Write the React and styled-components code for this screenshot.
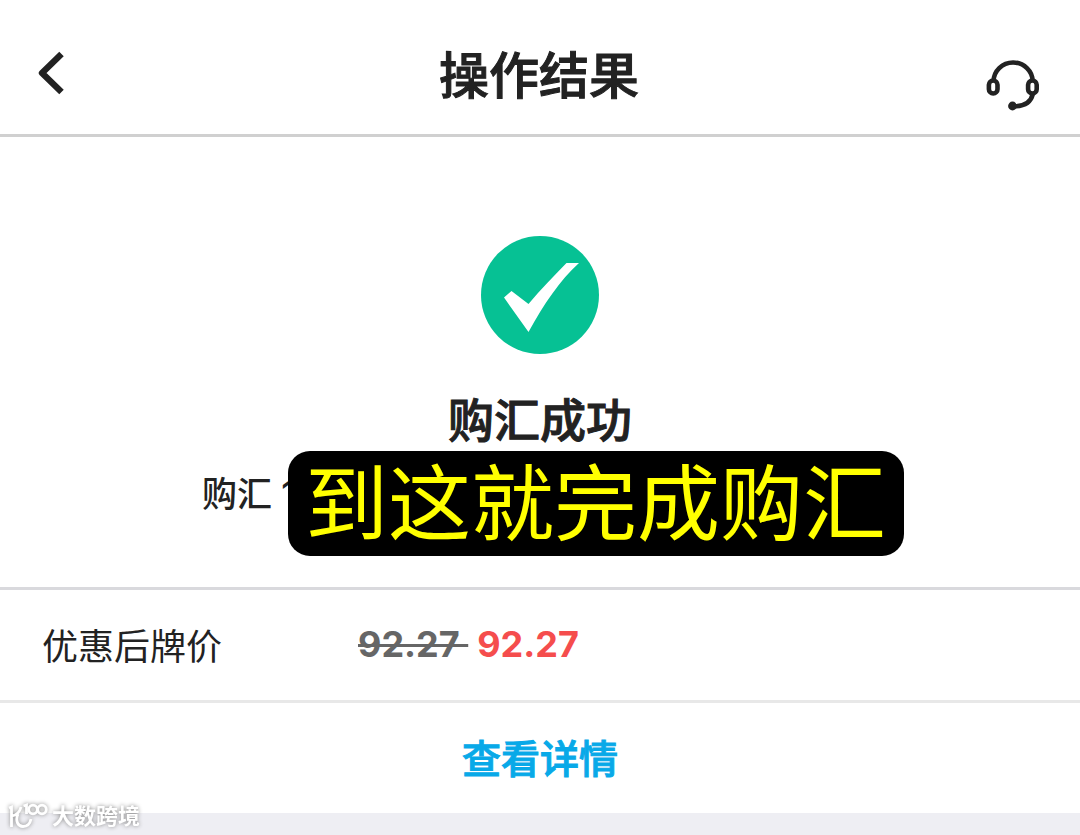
import React from 'react';
import styled, { createGlobalStyle } from 'styled-components';

const COLORS = {
  text: '#222222',
  muted: '#666666',
  price: '#f54d4d',
  link: '#08a9e8',
  success: '#06c194',
  page: '#eeeef3',
};

const WEIGHTS = {
  normal: 400,
  medium: 500,
  bold: 700,
};

const App = () => {
  return (
    <>
      <GlobalStyle />
      <Header>
        <BackButton aria-label='返回'>
          <BackIcon />
        </BackButton>
        <Title>操作结果</Title>
        <SupportButton aria-label='客服'>
          <HeadsetIcon />
        </SupportButton>
      </Header>
      <Main>
        <Result>
          <SuccessIcon />
          <ResultTitle>购汇成功</ResultTitle>
          <ResultDetail>购汇 1</ResultDetail>
          <Caption>到这就完成购汇</Caption>
        </Result>
        <RateRow>
          <RateLabel>优惠后牌价</RateLabel>
          <RateValue>
            <OldPrice>92.27 </OldPrice>
            <Price>92.27</Price>
          </RateValue>
        </RateRow>
        <DetailsRow>
          <DetailsLink href='#details'>查看详情</DetailsLink>
        </DetailsRow>
      </Main>
      <Watermark>
        <WatermarkLogo />
        <span>大数跨境</span>
      </Watermark>
    </>
  );
};

const BackIcon = () => (
  <svg width='28' height='46' viewBox='0 0 28 46' fill='none' aria-hidden='true'>
    <path
      d='M23.5 4 4 23l19.5 19'
      stroke={COLORS.text}
      strokeWidth='6.4'
      strokeLinejoin='round'
      strokeLinecap='butt'
    />
  </svg>
);

const HeadsetIcon = () => (
  <svg width='54' height='52' viewBox='0 0 54 52' fill='none' aria-hidden='true'>
    <g stroke={COLORS.text} strokeWidth='4.6'>
      <path d='M7.5 22.5A19.6 19 0 0 1 46.7 22.5' />
      <rect x='2.9' y='21.5' width='8.6' height='13' rx='4.3' />
      <rect x='42.1' y='21.5' width='8.6' height='13' rx='4.3' />
      <path d='M46.8 35C45 43 38 47.5 27 47.3' />
    </g>
    <circle cx='26.5' cy='47' r='4.4' fill={COLORS.text} />
  </svg>
);

const SuccessIcon = () => (
  <svg width='118' height='118' viewBox='0 0 118 118' aria-hidden='true'>
    <circle cx='59' cy='59' r='59' fill={COLORS.success} />
    <path
      d='M23 61.5 30.5 55 47.5 68C60 53 73 40 85.5 27H98C79 44 63 68 47.5 96Z'
      fill='#ffffff'
    />
  </svg>
);

const WatermarkLogo = () => (
  <svg width='40' height='28' viewBox='0 0 40 28' fill='none' aria-hidden='true'>
    <g stroke='#ffffff' strokeWidth='2.8'>
      <path d='M1 6 3.5 5V25M13 5C12 9 9 13 4 14M10 12C7 19 10 24.5 15 24.5S22 22 23 17' />
      <path d='M15.5 4 18.5 3V12' />
      <circle cx='25' cy='7.5' r='4.3' />
      <circle cx='34' cy='7.5' r='4.3' />
    </g>
  </svg>
);

const GlobalStyle = createGlobalStyle`
  *, *::before, *::after {
    box-sizing: border-box;
  }

  body {
    margin: 0;
    color: ${COLORS.text};
    background: ${COLORS.page};
    font-family: Inter, 'Noto Sans CJK SC', sans-serif;
  }

  h1, h2, p {
    margin: 0;
  }
`;

const Header = styled.header`
  display: grid;
  grid-template-columns: 1fr auto 1fr;
  align-items: center;
  padding: 18px 40px 0 38px;
  height: 137px;
  background: #ffffff;
  border-bottom: 3px solid #d0d0d0;
`;

const IconButton = styled.button`
  display: block;
  padding: 0;
  border: none;
  background: transparent;
  cursor: pointer;

  svg {
    display: block;
  }
`;

const BackButton = styled(IconButton)`
  justify-self: start;
  padding-bottom: 6px;
`;

const SupportButton = styled(IconButton)`
  justify-self: end;
  padding-top: 18px;
`;

const Title = styled.h1`
  font-size: 50px;
  line-height: 60px;
  font-weight: ${WEIGHTS.medium};
  -webkit-text-stroke: 1px currentColor;
`;

const Main = styled.main`
  background: #ffffff;
`;

const Result = styled.section`
  position: relative;
  display: flex;
  flex-direction: column;
  align-items: center;
  padding: 99px 0 68px;
  border-bottom: 3px solid #d9d9dd;
`;

const ResultTitle = styled.h2`
  margin-top: 37px;
  font-size: 46px;
  line-height: 58px;
  font-weight: ${WEIGHTS.medium};
  -webkit-text-stroke: 1px currentColor;
`;

const ResultDetail = styled.p`
  align-self: stretch;
  margin-top: 20px;
  padding-left: 202px;
  font-size: 35px;
  line-height: 50px;
  font-weight: ${WEIGHTS.medium};
`;

const Caption = styled.p`
  position: absolute;
  bottom: 31px;
  left: calc(50% - 252px);
  padding: 2px 18px 0 17px;
  border-radius: 22px;
  color: #ffff00;
  background: #000000;
  font-size: 83px;
  line-height: 103px;
  white-space: nowrap;
`;

const RateRow = styled.div`
  display: flex;
  align-items: center;
  height: 113px;
  padding: 0 42px 2px;
  border-bottom: 3px solid #e8e8e8;
`;

const RateLabel = styled.span`
  flex-basis: 316px;
  font-size: 36px;
`;

const RateValue = styled.span`
  font-size: 36px;
  font-weight: ${WEIGHTS.bold};
`;

const OldPrice = styled.s`
  margin-right: 9px;
  color: ${COLORS.muted};
  white-space: pre;
  text-decoration-thickness: 3px;
`;

const Price = styled.span`
  color: ${COLORS.price};
`;

const DetailsRow = styled.div`
  display: flex;
  justify-content: center;
  align-items: center;
  height: 110px;
  padding-bottom: 4px;
`;

const DetailsLink = styled.a`
  color: ${COLORS.link};
  font-size: 39px;
  font-weight: ${WEIGHTS.medium};
  text-decoration: none;
  -webkit-text-stroke: 1px currentColor;
`;

const Watermark = styled.div`
  position: fixed;
  left: 8px;
  bottom: 4px;
  display: flex;
  align-items: center;
  gap: 4px;
  color: #ffffff;
  font-size: 22px;
  line-height: 30px;
  font-weight: ${WEIGHTS.bold};
  filter: drop-shadow(0 0 2px #888888);
`;

export default App;
